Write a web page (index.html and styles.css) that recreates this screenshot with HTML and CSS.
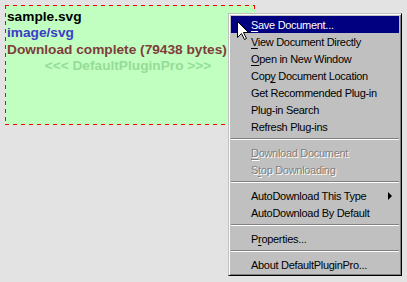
FILE: index.html
```html
<!DOCTYPE html>
<html>
<head>
<meta charset="utf-8">
<link rel="stylesheet" href="styles.css">
</head>
<body>
<div class="page">
  <div class="plugin">
    <div class="line name">sample.svg</div>
    <div class="line type">image/svg</div>
    <div class="line status">Download complete (79438 bytes)</div>
    <div class="line brand">&lt;&lt;&lt; DefaultPluginPro &gt;&gt;&gt;</div>
  </div>
</div>
<div class="menu">
  <div class="item active"><u>S</u>ave Document...</div>
  <div class="item"><u>V</u>iew Document Directly</div>
  <div class="item"><u>O</u>pen in New Window</div>
  <div class="item">Cop<u>y</u> Document Location</div>
  <div class="item">Get Recommended Plug-in</div>
  <div class="item">Plug-in Search</div>
  <div class="item">Refresh Plug-ins</div>
  <div class="sep"></div>
  <div class="item disabled"><u>D</u>ownload Document</div>
  <div class="item disabled">S<u>t</u>op Downloading</div>
  <div class="sep"></div>
  <div class="item sub">AutoDownload This Type<span class="arrow"></span></div>
  <div class="item">AutoDownload By Default</div>
  <div class="sep"></div>
  <div class="item">P<u>r</u>operties...</div>
  <div class="sep"></div>
  <div class="item">About DefaultPluginPro...</div>
</div>
<svg class="cursor" width="13" height="20" viewBox="0 0 13 20">
  <path d="M0.5 0.5 L0.5 16.5 L4.5 12.5 L7.5 18.5 L9.5 17.5 L6.5 11.5 L11.5 11.5 Z" fill="#fff" stroke="#000" stroke-width="1"/>
</svg>
</body>
</html>
```
FILE: styles.css
```css
html, body {
  margin: 0;
  padding: 0;
}
body {
  width: 407px;
  height: 282px;
  background: #e3e3e3;
  overflow: hidden;
  position: relative;
}
.page {
  padding: 5px;
}
.plugin {
  width: 250px;
  height: 120px;
  box-sizing: border-box;
  padding: 4px 2px 0 2px;
  background:
    repeating-linear-gradient(90deg, #ff0000 0 4px, transparent 4px 8px) left top / 100% 1px no-repeat,
    repeating-linear-gradient(90deg, #ff0000 0 4px, transparent 4px 8px) left bottom / 100% 1px no-repeat,
    repeating-linear-gradient(180deg, #ff0000 0 4px, transparent 4px 8px) left top / 1px 100% no-repeat,
    repeating-linear-gradient(180deg, #ff0000 0 4px, transparent 4px 8px) right top / 1px 100% no-repeat,
    #c0ffc0;
  font-family: "Liberation Sans", Arial, sans-serif;
  font-weight: bold;
  font-size: 13.7px;
}
.line {
  height: 16.3px;
  line-height: 16px;
  white-space: nowrap;
}
.name { color: #000000; }
.type { color: #3c3cc8; }
.status { color: #803c3c; }
.brand {
  color: #96dc96;
  text-align: center;
  padding-right: 4px;
}
.menu {
  position: absolute;
  left: 228px;
  top: 13px;
  width: 174px;
  box-sizing: border-box;
  background: #c0c0c0;
  border-top: 1px solid #c0c0c0;
  border-left: 1px solid #c0c0c0;
  border-right: 1px solid #000000;
  border-bottom: 1px solid #000000;
  box-shadow: inset 1px 1px 0 #ffffff, inset -1px -1px 0 #808080;
  padding: 2px;
  font-family: "Liberation Sans", Arial, sans-serif;
  font-size: 11px;
  letter-spacing: -0.3px;
  color: #000;
}
.item {
  height: 17px;
  line-height: 18px;
  padding-left: 20px;
  white-space: nowrap;
  position: relative;
}
.item u {
  text-decoration: underline;
  text-underline-offset: 2px;
}
.item.active {
  background: #000080;
  color: #ffffff;
}
.item.disabled {
  color: #808080;
  text-shadow: 1px 1px 0 #ffffff;
}
.sep {
  height: 9px;
  box-sizing: border-box;
  padding: 4px 0 3px 0;
}
.sep::before {
  content: "";
  display: block;
  border-top: 1px solid #808080;
  background: #ffffff;
  height: 1px;
  margin-top: -1px;
}
.arrow {
  position: absolute;
  right: 7px;
  top: 5px;
  width: 0;
  height: 0;
  border-top: 4px solid transparent;
  border-bottom: 4px solid transparent;
  border-left: 4px solid #000;
}
.cursor {
  position: absolute;
  left: 237px;
  top: 21px;
}
```
